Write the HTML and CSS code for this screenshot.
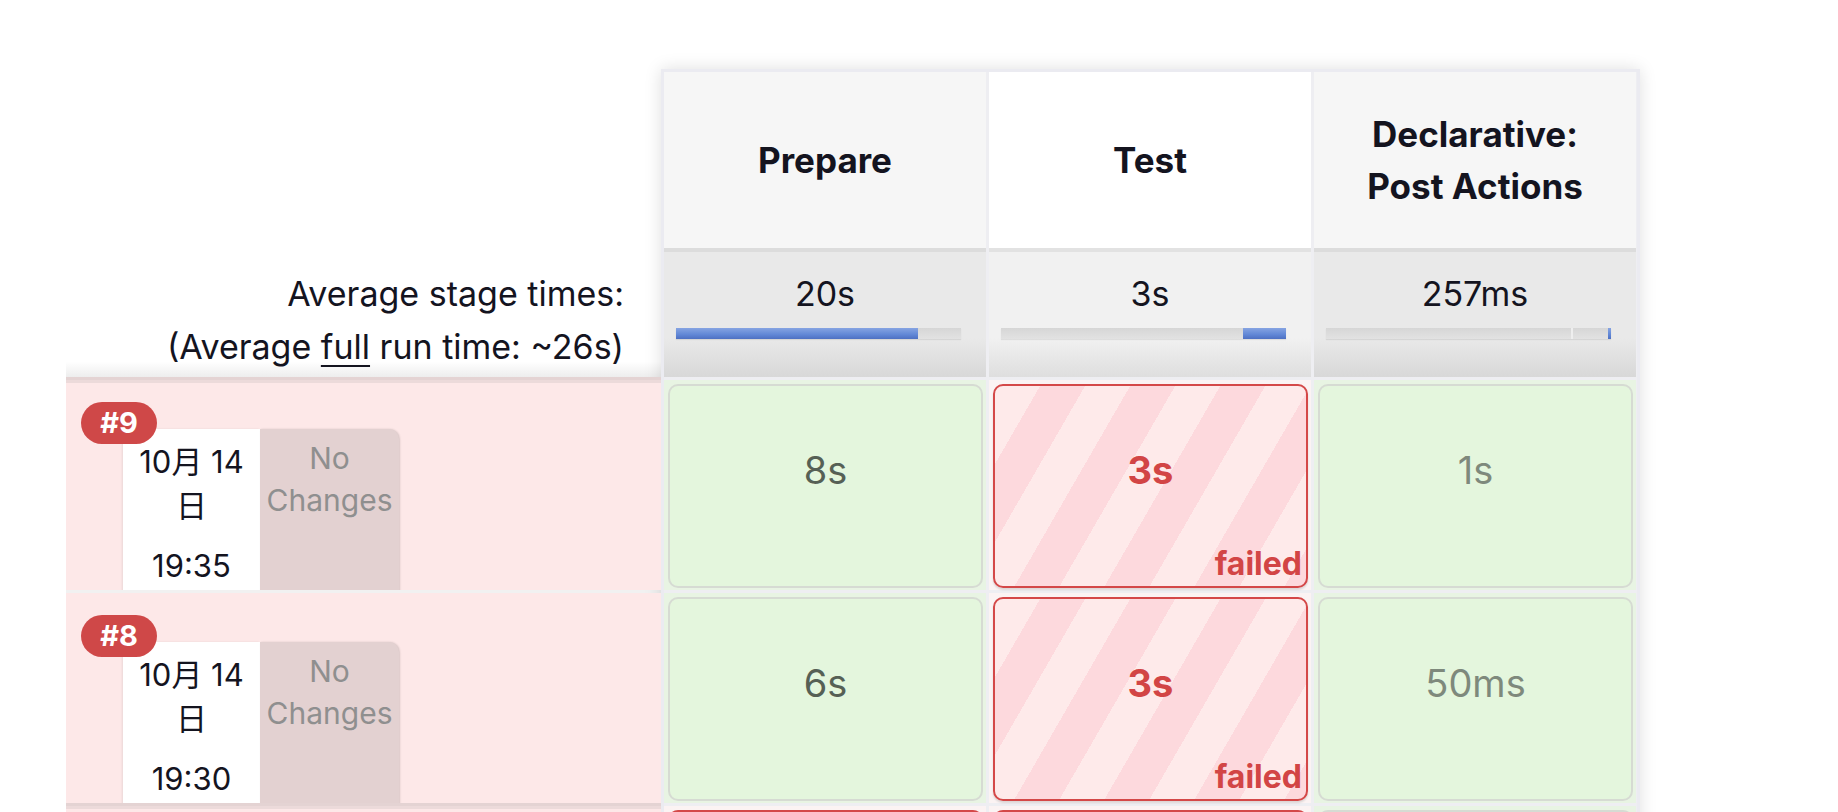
FILE: index.html
```html
<!DOCTYPE html>
<html lang="ja">
<head>
<meta charset="utf-8">
<title>Stage View</title>
<link rel="stylesheet" href="styles.css">
</head>
<body>
<div class="page">
  <div class="runs">
    <div class="runs-head"></div>
    <div class="avg-label">
      <div>Average stage times:</div>
      <div>(Average <u>full</u> run time: ~26s)</div>
    </div>
    <div class="run first">
      <div class="run-info">
        <span class="badge">#9</span>
        <div class="date">
          <div class="day">10月 14 日</div>
          <div class="time">19:35</div>
        </div>
        <div class="changes">No Changes</div>
      </div>
    </div>
    <div class="run">
      <div class="run-info">
        <span class="badge">#8</span>
        <div class="date">
          <div class="day">10月 14 日</div>
          <div class="time">19:30</div>
        </div>
        <div class="changes">No Changes</div>
      </div>
    </div>
    <div class="run first"></div>
  </div>

  <div class="stages">
    <div class="row head">
      <div class="cell">Prepare</div>
      <div class="cell hl">Test</div>
      <div class="cell">Declarative:<br>Post Actions</div>
    </div>
    <div class="row avg">
      <div class="cell">
        <div class="avg-time">20s</div>
        <div class="bar"><span class="fill" style="left:0;width:85%"></span></div>
      </div>
      <div class="cell alt">
        <div class="avg-time">3s</div>
        <div class="bar"><span class="fill" style="left:85%;width:15%"></span></div>
      </div>
      <div class="cell">
        <div class="avg-time">257ms</div>
        <div class="bar"><span class="split"></span><span class="fill" style="left:99%;width:1%"></span></div>
      </div>
    </div>
    <div class="row build">
      <div class="cell ok"><div class="box ok"><span class="dur dark">8s</span></div></div>
      <div class="cell bad"><div class="box failed"><span class="dur">3s</span><span class="status">failed</span></div></div>
      <div class="cell ok"><div class="box ok"><span class="dur light">1s</span></div></div>
    </div>
    <div class="row build">
      <div class="cell ok"><div class="box ok"><span class="dur dark">6s</span></div></div>
      <div class="cell bad"><div class="box failed"><span class="dur">3s</span><span class="status">failed</span></div></div>
      <div class="cell ok"><div class="box ok"><span class="dur light">50ms</span></div></div>
    </div>
    <div class="row build">
      <div class="cell bad"><div class="box failed"></div></div>
      <div class="cell bad"><div class="box failed"></div></div>
      <div class="cell ok"><div class="box ok"></div></div>
    </div>
  </div>
</div>
</body>
</html>
```

FILE: styles.css
```css
* { box-sizing: border-box; }
html, body { margin: 0; padding: 0; background: #fff; }
body {
  font-family: Inter, "Noto Sans CJK JP", "DejaVu Sans", sans-serif;
  color: #14141f;
}
.page {
  display: flex;
  align-items: flex-start;
  padding: 69px 0 0 66px;
  height: 812px;
  overflow: hidden;
}

/* left column: runs */
.runs {
  width: 595px;
  display: flex;
  flex-direction: column;
  background: #f1f1f1;
}
.runs-head { height: 180px; background: #fff; }
.avg-label {
  height: 128px;
  padding: 18px 37px 0 0;
  text-align: right;
  font-size: 34px;
  line-height: 53px;
  background: linear-gradient(to bottom, #fff 0, #fff 88%, #ededed 100%);
}
.avg-label u { text-decoration-thickness: 2px; text-underline-offset: 6px; }
.run {
  position: relative;
  height: 210px;
  margin-top: 3px;
  background: #fde8e8;
  overflow: hidden;
}
.run.first {
  box-shadow: 0 -3px 0 #e4d3d3, inset 0 3px 0 #ecdada;
}
.run-info {
  position: relative;
  display: flex;
  height: 100%;
  margin: 49px 0 0 57px;
}
.badge {
  position: absolute;
  left: -42px;
  top: -27px;
  z-index: 2;
  width: 76px;
  height: 42px;
  border-radius: 21px;
  background: #cf4848;
  color: #fff;
  font-weight: 700;
  font-size: 29px;
  line-height: 42px;
  text-align: center;
}
.date {
  width: 137px;
  background: #fff;
  text-align: center;
  font-size: 31px;
  line-height: 44px;
  padding: 11px 6px 0;
  box-shadow: -1px 0 2px rgba(0,0,0,.08);
}
.time { margin-top: 16px; }
.changes {
  width: 139px;
  background: #e3d1d1;
  border-top-right-radius: 10px;
  color: #8f8f8f;
  text-align: center;
  font-size: 30px;
  line-height: 42px;
  padding: 8px 2px 0;
  box-shadow: 1px 0 2px rgba(0,0,0,.15);
}

/* stage table */
.stages {
  width: 979px;
  border: 3px solid #ebebf1;
  background: #eeeef2;
  box-shadow: 0 0 16px rgba(0,0,0,.13);
}
.row {
  display: grid;
  grid-template-columns: 322px 322px 322px;
  column-gap: 3px;
}
.row.head { height: 176px; }
.head .cell {
  display: flex;
  align-items: center;
  justify-content: center;
  text-align: center;
  background: #f6f6f6;
  font-weight: 700;
  font-size: 35px;
  line-height: 52px;
}
.head .cell.hl { background: #fff; }

.row.avg { height: 129px; }
.avg .cell {
  padding-top: 19px;
  text-align: center;
  background: linear-gradient(to bottom, #dcdcdc 0, #dcdcdc 4px, #e9e9e9 4px, #e9e9e9 70%, #d8d8d8 100%);
}
.avg .cell.alt {
  background: linear-gradient(to bottom, #e2e2e2 0, #e2e2e2 4px, #f1f1f1 4px, #f1f1f1 70%, #dedede 100%);
}
.avg-time { font-size: 34px; line-height: 53px; }
.bar {
  position: relative;
  margin: 8px 0 0 12px;
  width: 285px;
  height: 11px;
  background: linear-gradient(to bottom, #d6d6d6, #e2e2e2);
  box-shadow: 0 1px 1px rgba(0,0,0,.08);
}
.bar .fill {
  position: absolute;
  top: 0;
  bottom: 0;
  background: linear-gradient(to bottom, #86a4e2 0, #6187d6 60%, #4d70c2 100%);
}
.bar .split {
  position: absolute;
  top: 0;
  bottom: 0;
  left: 86%;
  width: 2px;
  background: #eeeeee;
}

.row.build { height: 210px; margin-top: 3px; }
.build .cell { padding: 4px 3px 2px 4px; }
.build .cell.ok { background: #e8f4e3; }
.build .cell.bad { background: #fbf3f3; }
.box {
  position: relative;
  height: 100%;
  border-radius: 10px;
  text-align: center;
  padding-top: 62px;
}
.box.ok {
  background: #e4f6dd;
  border: 2px solid #d6dbd3;
}
.box.failed {
  border: 2px solid #d44848;
  background: repeating-linear-gradient(120deg, #feeaea 0, #feeaea 39px, #fdd9dd 39px, #fdd9dd 78px);
  box-shadow: 0 2px 2px rgba(0,0,0,.12);
  color: #d24545;
  font-weight: 700;
}
.dur { font-size: 38px; line-height: 44px; }
.dur.dark { color: #566055; }
.dur.light { color: #7e897c; }
.status {
  position: absolute;
  right: 4px;
  bottom: 4px;
  font-size: 32px;
  line-height: 36px;
  font-weight: 700;
}
```
